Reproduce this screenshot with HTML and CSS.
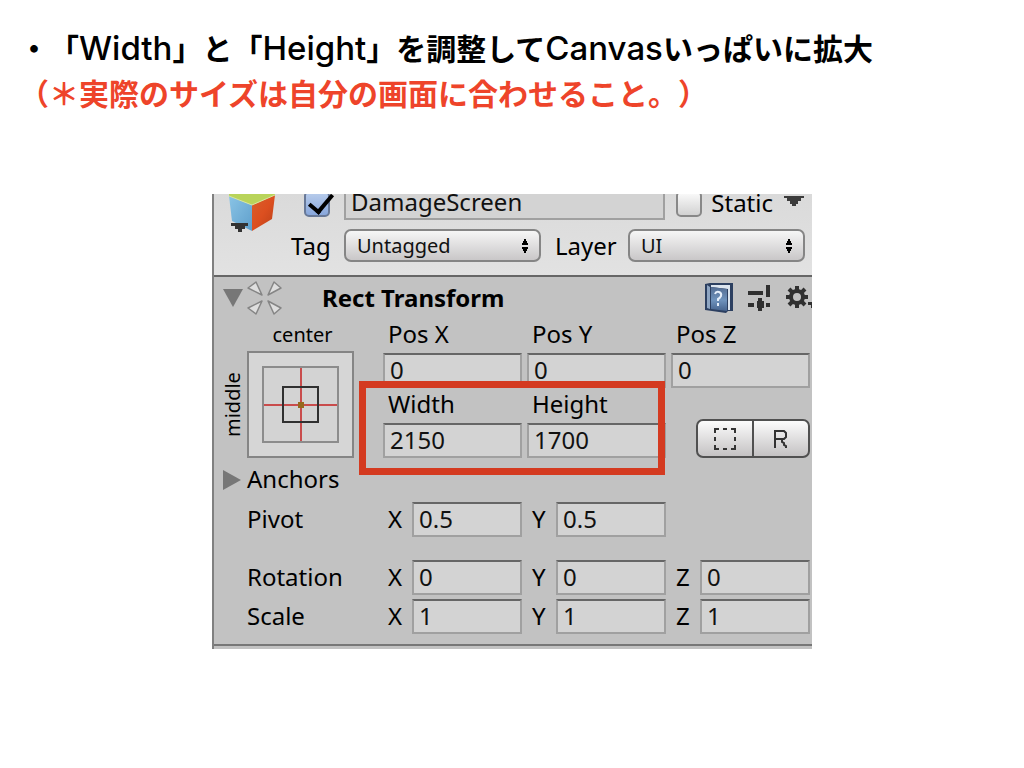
FILE: index.html
```html
<!DOCTYPE html>
<html lang="ja">
<head>
<meta charset="utf-8">
<title>Rect Transform</title>
<link rel="stylesheet" href="styles.css">
</head>
<body>
<main class="slide">
  <header class="notes">
    <p class="note">・「<span class="latin">Width</span>」と「<span class="latin">Height</span>」を調整して<span class="latin">Canvas</span>いっぱいに拡大</p>
    <p class="note note-warn">（＊実際のサイズは自分の画面に合わせること。）</p>
  </header>

  <section class="inspector" aria-label="Inspector">
    <div class="object">
      <svg class="cube" viewBox="0 0 48 40" aria-hidden="true">
        <defs>
          <linearGradient id="blue" x1="0" y1="0" x2="1" y2="1"><stop offset="0" stop-color="#8ac4e6"/><stop offset="1" stop-color="#5f9fcb"/></linearGradient>
          <linearGradient id="red" x1="0" y1="0" x2="1" y2="1"><stop offset="0" stop-color="#d8602c"/><stop offset=".5" stop-color="#dc4f20"/><stop offset="1" stop-color="#b94018"/></linearGradient>
        </defs>
        <path d="M1 0H47V2L24 11L1 3Z" fill="#b9d45a"/>
        <path d="M1 2L24 11V37L4 27Z" fill="url(#blue)"/>
        <path d="M47 1L24 11V37L44 25Z" fill="url(#red)"/>
        <path d="M1 2L24 11L47 1" fill="none" stroke="#d9e6a0"/>
        <path d="M3 29H20V32H17V35H14V38H10V35H7V32H3Z" fill="#333"/>
      </svg>
      <div class="object-rows">
        <div class="name-row">
          <input class="check active-check" type="checkbox" checked aria-label="Active">
          <input class="field name-field" type="text" value="DamageScreen" aria-label="Name">
          <label class="static"><input class="check" type="checkbox"><span>Static</span></label>
          <svg class="static-arrow" viewBox="0 0 20 10" aria-hidden="true"><path d="M0 0H20V2H17V5H14V8H12V10H8V8H6V5H3V2H0Z" fill="#3c3c3c"/></svg>
        </div>
        <div class="tag-row">
          <label class="tag-label" for="tag">Tag</label>
          <div class="popup tag-popup">
            <select id="tag"><option>Untagged</option></select>
            <svg viewBox="0 0 8 16" aria-hidden="true"><path d="M3 1H5V3H6V5H7V7H1V5H2V3H3ZM1 9H7V11H6V13H5V15H3V13H2V11H1Z"/></svg>
          </div>
          <label class="layer-label" for="layer">Layer</label>
          <div class="popup layer-popup">
            <select id="layer"><option>UI</option></select>
            <svg viewBox="0 0 8 16" aria-hidden="true"><path d="M3 1H5V3H6V5H7V7H1V5H2V3H3ZM1 9H7V11H6V13H5V15H3V13H2V11H1Z"/></svg>
          </div>
        </div>
      </div>
    </div>

    <div class="component">
      <div class="title-row">
        <svg class="fold" viewBox="0 0 20 18" aria-hidden="true"><path d="M0 0H20L10 18Z" fill="#777"/></svg>
        <svg class="rect-icon" viewBox="0 0 36 36" aria-hidden="true">
          <g fill="#dedede" stroke="#858585" stroke-width="1.5" stroke-linejoin="round"><path d="M9 2L15 15L1 8Z"/><path d="M27 2L34 8L21 15Z"/><path d="M1 28L15 21L9 34Z"/><path d="M21 21L34 28L27 34Z"/></g>
        </svg>
        <h2 class="title">Rect Transform</h2>
        <svg class="book" viewBox="0 0 30 32" aria-hidden="true">
          <defs><linearGradient id="cover" x1="0" y1="0" x2="0" y2="1"><stop offset="0" stop-color="#536c92"/><stop offset=".55" stop-color="#6f93bd"/><stop offset="1" stop-color="#46638e"/></linearGradient></defs>
          <path d="M1 2L6 1H29V29H24L22 31L1 28Z" fill="#2c3f60"/>
          <path d="M7 3H26V28H24V7L7 5Z" fill="#dce5ef"/>
          <path d="M3 3L6 5V27L3 26Z" fill="#8ea5c2"/>
          <path d="M7 5L23 7V29L7 27Z" fill="url(#cover)"/>
          <path d="M11 12Q12 9 15 10Q18 11 17 14Q16 16 14 17V19M14 21V24" fill="none" stroke="#e5eefa" stroke-width="2"/>
        </svg>
        <svg class="sliders" viewBox="0 0 24 26" aria-hidden="true"><path d="M0 6H15V10H0ZM18 0H22V12H18ZM0 18H6V22H0ZM9 16H10V13H14V16H16V23H14V26H10V23H9ZM18 18H22V22H18Z" fill="#303030"/></svg>
        <svg class="gear" viewBox="0 0 26 24" aria-hidden="true">
          <circle cx="11" cy="11" r="6" fill="none" stroke="#303030" stroke-width="4"/>
          <path d="M11 0V4M11 18V22M0 11H4M18 11H22M3 3L6 6M16 16L19 19M3 19L6 16M16 6L19 3" stroke="#303030" stroke-width="4"/>
          <path d="M22 16H26V22H25V19H22Z" fill="#303030"/>
        </svg>
      </div>

      <div class="layout">
        <div class="anchor">
          <span class="anchor-h">center</span>
          <span class="anchor-v">middle</span>
          <button class="anchor-box" type="button" aria-label="Anchor presets">
            <svg viewBox="0 0 103 103" aria-hidden="true">
              <rect x="14" y="14" width="75" height="75" fill="#d3d3d3" stroke="#8c8c8c" stroke-width="2"/>
              <path d="M52 15V88M15 52H88" stroke="#c94c4c" stroke-width="2"/>
              <rect x="34" y="34" width="35" height="35" fill="none" stroke="#303030" stroke-width="2"/>
              <rect x="49" y="49" width="6" height="6" fill="#96691e"/>
            </svg>
          </button>
        </div>
        <div class="geometry">
          <label class="stack"><span>Pos X</span><input class="field" type="text" value="0"></label>
          <label class="stack"><span>Pos Y</span><input class="field" type="text" value="0"></label>
          <label class="stack"><span>Pos Z</span><input class="field" type="text" value="0"></label>
          <label class="stack"><span>Width</span><input class="field" type="text" value="2150"></label>
          <label class="stack"><span>Height</span><input class="field" type="text" value="1700"></label>
          <div class="modes">
            <button type="button" aria-label="Blueprint mode"><svg viewBox="0 0 22 22" aria-hidden="true"><path d="M0 0H5V2H2V5H0ZM9 0H13V2H9ZM17 0H22V5H20V2H17ZM0 9H2V13H0ZM20 9H22V13H20ZM0 17H2V20H5V22H0ZM9 20H13V22H9ZM20 17H22V22H17V20H20Z" fill="#333"/></svg></button>
            <button type="button" aria-label="Raw edit mode"><svg viewBox="0 0 14 18" aria-hidden="true"><path d="M1 18V1H10L12 3V7L10 9H1M8 9V12L10 13V15L12 16V18" fill="none" stroke="#333" stroke-width="2"/></svg></button>
          </div>
          <div class="highlight"></div>
        </div>
      </div>

      <div class="anchors-row">
        <svg class="fold-closed" viewBox="0 0 18 20" aria-hidden="true"><path d="M0 0L18 10L0 20Z" fill="#777"/></svg>
        <span>Anchors</span>
      </div>

      <div class="vectors">
        <div class="vector pivot">
          <span class="vector-name">Pivot</span>
          <label class="axis"><span>X</span><input class="field" type="text" value="0.5"></label>
          <label class="axis"><span>Y</span><input class="field" type="text" value="0.5"></label>
        </div>
        <div class="vector">
          <span class="vector-name">Rotation</span>
          <label class="axis"><span>X</span><input class="field" type="text" value="0"></label>
          <label class="axis"><span>Y</span><input class="field" type="text" value="0"></label>
          <label class="axis"><span>Z</span><input class="field" type="text" value="0"></label>
        </div>
        <div class="vector">
          <span class="vector-name">Scale</span>
          <label class="axis"><span>X</span><input class="field" type="text" value="1"></label>
          <label class="axis"><span>Y</span><input class="field" type="text" value="1"></label>
          <label class="axis"><span>Z</span><input class="field" type="text" value="1"></label>
        </div>
      </div>
    </div>
  </section>
</main>
</body>
</html>
```

FILE: styles.css
```css
* { box-sizing: border-box; }

body {
  margin: 0;
  background: #fff;
  color: #000;
}

.slide { padding: 25px 19px; }

.notes {
  font-family: "Noto Sans CJK JP", sans-serif;
  font-size: 30px;
  font-weight: 700;
  line-height: 45px;
  text-spacing-trim: space-all;
}

.note { margin: 0; }
.note-warn { color: #ee442a; }

.latin {
  font-family: Inter, "Noto Sans CJK JP", sans-serif;
  font-weight: 500;
  font-size: 33px;
  line-height: 1;
}

.inspector {
  max-width: 600px;
  margin: 79px auto 0;
  overflow: hidden;
  border-left: 2px solid #808080;
  padding-bottom: 3px;
  background: #c2c2c2;
  font-family: "Noto Sans", "Open Sans", sans-serif;
  font-size: 24px;
  line-height: 32px;
}

.inspector svg { display: block; flex: none; }

.inspector input, .inspector select {
  margin: 0;
  color: #111;
  font-family: inherit;
}

.field {
  width: 100%;
  min-width: 0;
  height: 35px;
  padding: 0 5px 3px;
  border: 2px solid #a0a0a0;
  border-top-color: #666;
  border-radius: 0;
  background: #d3d3d3;
  font-size: 24px;
}

/* Game object header */
.object {
  display: flex;
  gap: 15px;
  padding: 0 7px 13px 14px;
  border-bottom: 2px solid #666;
  background: linear-gradient(#dadada, #e2e2e2);
}

.cube { width: 48px; height: 40px; }
.object-rows { flex: 1; min-width: 0; }

.name-row {
  display: flex;
  align-items: flex-end;
  height: 26px;
}

.inspector .check {
  appearance: none;
  flex: none;
  width: 26px;
  height: 26px;
  margin-bottom: 3px;
  border: 2px solid #888;
  border-radius: 5px;
  background: linear-gradient(#fafafa, #d2d2d2);
}

.inspector .active-check { margin: 0 14px 3px 13px; }

.inspector .check:checked {
  border-color: #687998;
  background: linear-gradient(#b8cceb, #88a7dc);
}

.check:checked::after {
  content: "";
  display: block;
  width: 10px;
  height: 20px;
  margin: -4px 0 0 8px;
  border: solid #000;
  border-width: 0 4px 4px 0;
  transform: rotate(40deg);
}

.name-field { flex: 1; border-top-color: #a0a0a0; }

.static {
  display: flex;
  align-items: flex-end;
  gap: 9px;
  margin-left: 11px;
}
.static span { margin-bottom: 5px; line-height: 24px; }

.static-arrow {
  width: 20px;
  height: 10px;
  margin: 0 1px 14px 11px;
}

.tag-row {
  display: flex;
  align-items: center;
  margin-top: 9px;
}

.tag-label { width: 53px; }
.layer-label { width: 73px; margin-left: 14px; }

.popup { position: relative; min-width: 0; }
.tag-popup { flex: 197; }
.layer-popup { flex: 177; }

.popup select {
  appearance: none;
  display: block;
  width: 100%;
  height: 33px;
  padding: 0 11px;
  border: 2px solid #858585;
  border-radius: 7px;
  background: linear-gradient(#f6f6f6, #c9c7c8);
  font-size: 20px;
}

.popup svg {
  position: absolute;
  top: 9px;
  right: 12px;
  width: 8px;
  height: 16px;
  pointer-events: none;
}

/* Component title */
.title-row {
  display: flex;
  align-items: center;
  height: 41px;
  padding-left: 9px;
}

.fold { width: 20px; height: 18px; }
.rect-icon { width: 36px; height: 36px; margin-left: 4px; }

.title {
  flex: 1;
  margin: 0 0 0 39px;
  font-size: 24px;
  font-weight: 700;
}

.book { width: 30px; height: 32px; }
.sliders { width: 24px; height: 26px; margin-left: 14px; }
.gear { width: 26px; height: 24px; margin-left: 14px; }

/* Anchor preset and position fields */
.layout {
  display: grid;
  grid-template-columns: 140px 1fr;
  column-gap: 29px;
  padding-right: 2px;
}

.anchor {
  display: grid;
  grid-template-columns: 33px 107px;
  grid-template-rows: 33px 107px;
  font-size: 20px;
}

.anchor-h {
  grid-column: 2;
  padding-left: 4px;
  text-align: center;
  line-height: 34px;
}

.anchor-v {
  writing-mode: vertical-rl;
  transform: rotate(180deg);
  width: 33px;
  line-height: 37px;
  text-align: center;
}

.anchor-box {
  width: 107px;
  height: 107px;
  padding: 0;
  border: 2px solid #858585;
  background: #d6d6d6;
}

.geometry {
  position: relative;
  display: grid;
  grid-template-columns: repeat(3, 1fr);
  column-gap: 5px;
}

.stack { display: block; min-width: 0; }

.stack span {
  display: block;
  padding: 0 0 4px 5px;
  line-height: 31px;
}

.stack .field { display: block; }

.modes {
  display: flex;
  place-self: end;
  width: 114px;
  height: 39px;
}

.modes button {
  display: grid;
  flex: 1;
  place-items: center;
  padding: 0;
  border: 2px solid #505050;
  border-radius: 7px 0 0 7px;
  background: linear-gradient(#fcfcfc, #c4c2c3);
}

.modes button + button {
  margin-left: -2px;
  border-radius: 0 7px 7px 0;
}

.modes button:first-child svg { width: 22px; height: 22px; }
.modes button:last-child svg { width: 14px; height: 18px; }

.highlight {
  position: absolute;
  inset: 63px 145px -17px -24px;
  border: 7px solid #d43a20;
  pointer-events: none;
}

/* Foldout and vector rows */
.anchors-row {
  display: flex;
  align-items: center;
  gap: 6px;
  height: 44px;
  padding-left: 9px;
}

.anchors-row span, .vector-name, .axis span { padding-bottom: 2px; }

.fold-closed { width: 18px; height: 20px; }

.vectors {
  display: grid;
  row-gap: 4px;
  padding: 0 2px 10px 33px;
  border-bottom: 2px solid #777;
}

.vector {
  display: grid;
  grid-template-columns: 131px repeat(3, 1fr);
  column-gap: 5px;
  align-items: center;
}

.pivot { margin-bottom: 19px; }

.axis {
  display: flex;
  align-items: center;
  min-width: 0;
}

.axis span {
  flex: none;
  width: 29px;
  padding-left: 5px;
}
```
